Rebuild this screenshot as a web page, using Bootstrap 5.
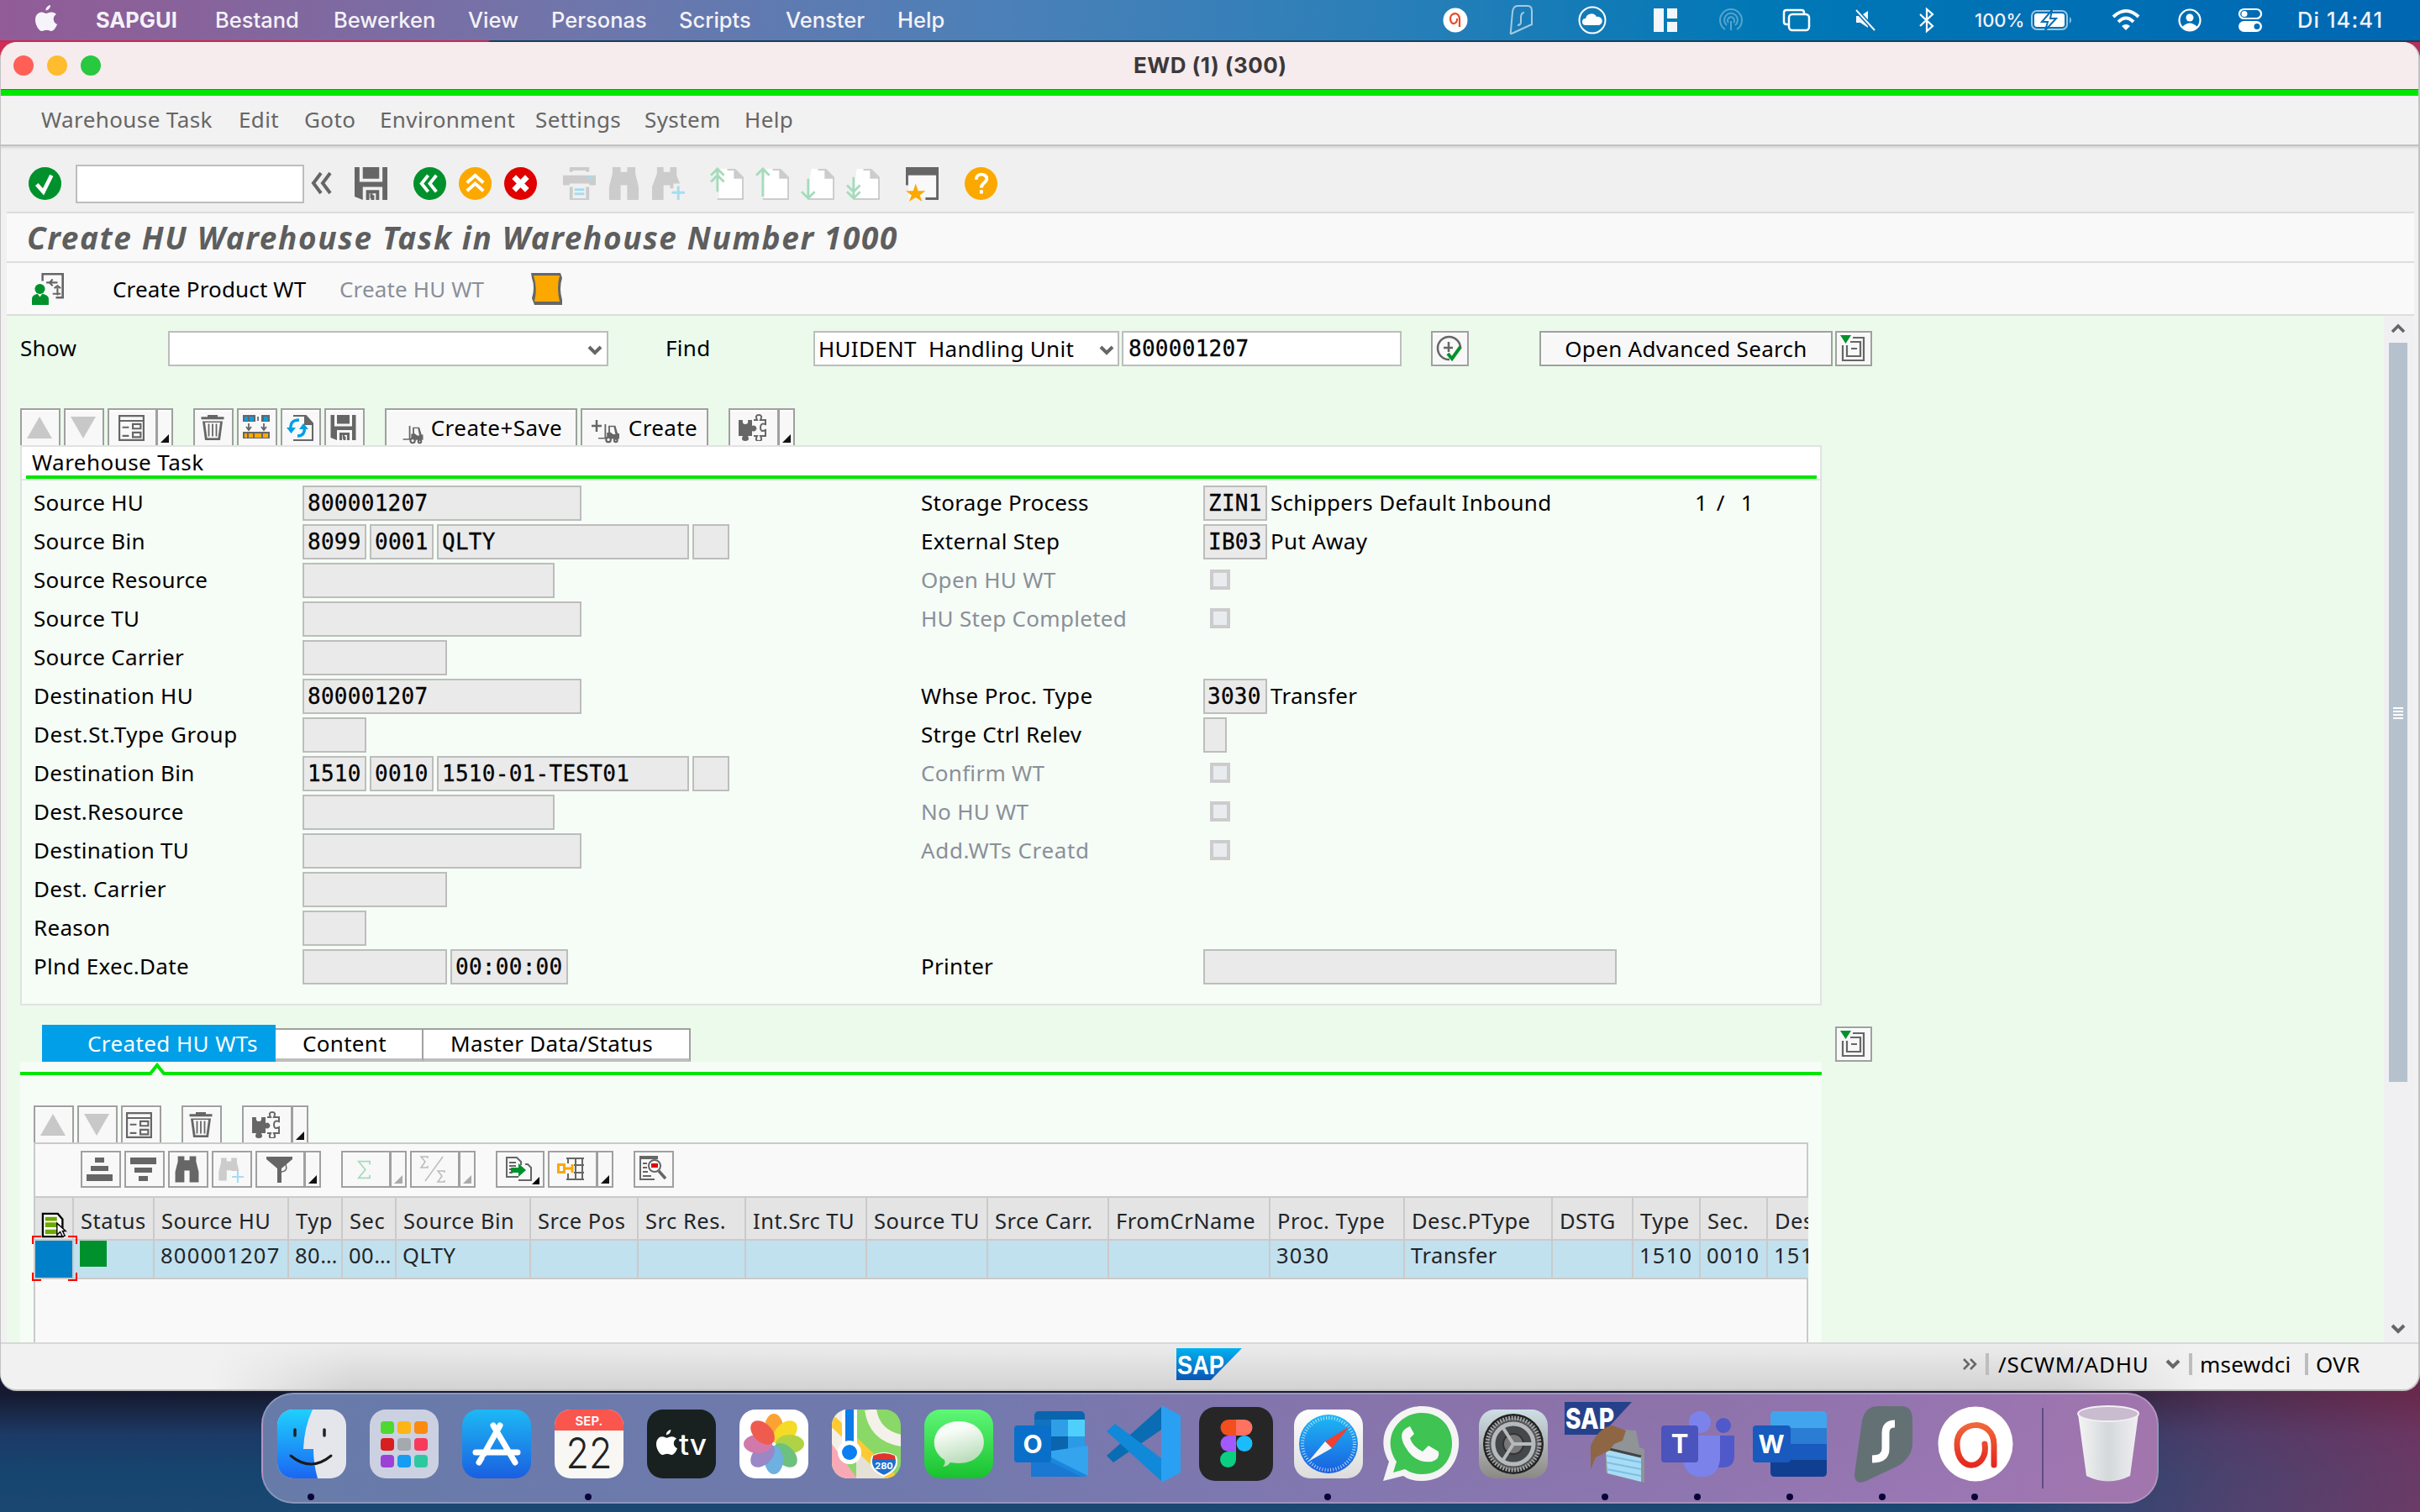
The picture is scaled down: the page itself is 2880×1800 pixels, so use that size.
<!DOCTYPE html>
<html lang="en">
<head>
<meta charset="utf-8">
<title>EWD (1) (300)</title>
<link rel="stylesheet" href="https://cdn.jsdelivr.net/npm/bootstrap@5.3.0/dist/css/bootstrap.min.css">
<style>
html,body{width:2880px;height:1800px;overflow:hidden}
body{font:26px/42px "Noto Sans","Open Sans",sans-serif;letter-spacing:.3px;color:#000;background:linear-gradient(90deg,#12406a00 0,#12406a00 82%,#7b3f6c88 92%,#a0335f99 100%),linear-gradient(180deg,#d12c56 0,#d12c56 800px,#161a30 1000px,#161a30 1660px,#1c3a66 1708px,#154670 1760px,#1b4773 100%)}
svg{display:block;flex:none;overflow:visible}
.grd{display:grid;white-space:nowrap}
.macbar{height:50px;line-height:48px;padding-bottom:2px;letter-spacing:0;font-family:Inter,sans-serif;font-size:25.5px;font-weight:500;color:#f4f2f8;padding-left:42px;grid-template-columns:72px 142px 141px 160px 99px 152px 127px 133px 649px 79px 82px 90px 78px 75px 85px 78px 66px 163px 79px 72px 70px 120px;align-items:center;background:linear-gradient(90deg,#c9284f 580px,#173f5a 584px) 0 48px/100% 2px no-repeat,linear-gradient(90deg,#915c98 0,#8a6199 180px,#6e76ab 700px,#4b80b8 1200px,#2a7fb8 1650px,#0078b6 2100px,#0067b2 2880px)}
.sapwin{height:1606px;border-radius:20px;overflow:hidden;background:#f1f1f1;border:solid #c2c2c2;border-width:0 2px 2px 1px}
.titlebar{height:56px;background:#f6eced;font:bold 26px/54px Inter,sans-serif;color:#3d383a;grid-template-columns:40px 40px 1253px 1fr;padding-left:15px;align-items:center}
.titlebar span{letter-spacing:.45px}
.lamp{width:24px;height:24px;border-radius:50%}
.greenbar{height:8px;background:#00e600;border-top:1px solid #0aa80a}
.sapmenu{height:58px;line-height:57px;padding-left:48px;color:#666;grid-template-columns:235px 78px 90px 185px 130px 119px 80px;background:#f2f2f2}
.sapmenu span{letter-spacing:.4px}
.sysbar{height:80px;padding:12px 0 0 33px;border-top:2px solid #c2c2c2;background:linear-gradient(#dcdcdc 2px,#eaeaea 2px 4px,#f0f0f0 4px)}
.sysbar svg{margin-top:-2px}
.cmdbox{width:272px;height:46px;border:2px solid #bdbdbd;background:#fff}
.main-col{margin:0 5px 0 7px}
.apptitle{height:59px;border-top:2px solid #ddd;background:#f9f9f9;font:italic bold 37px/57px "Noto Sans",sans-serif;letter-spacing:1.62px;color:#5e5e5e;padding-left:24px;white-space:nowrap}
.appbar{height:65px;border:solid #ddd;border-width:2px 0;background:#f9f9f9;grid-template-columns:96px 270px 228px 60px;align-items:center;padding-left:30px;letter-spacing:.15px}
.workarea{height:1222px;background:#ebfaeb;overflow:hidden}
.vscroll{width:36px;margin-left:auto;background:#f0f0f2;padding:10px 8px 0 6px}
.vthumb{width:22px;height:880px;background:#b5c2ce;margin-top:10px;padding:434px 5px 0}
.fld{height:42px;border:2px solid #bdbdbd;background:#eaeaea;font:26px/38px "DejaVu Sans Mono",monospace;padding-left:4px;white-space:pre;letter-spacing:.28px;margin-right:4px;flex:none;-webkit-text-stroke:.3px #000}
.fldw{background:#fff}
.tb{border:2px solid #a0a0a0;background:#f8f8f8;height:44px;width:48px;display:flex;align-items:center;justify-content:center;flex:none;box-shadow:inset 0 2px #fff;padding-right:3px}
.tabbtn{border-bottom:0}
.split{width:20px;margin-left:-1px;align-items:flex-end;justify-content:flex-end;padding:0 3px 3px 0}
.split::after{content:"";border:5px solid #111;border-top-color:#0000;border-left-color:#0000}
.split.off::after{border-right-color:#aaa;border-bottom-color:#aaa}
.me4{margin-right:4px}
.panelbox{width:2144px;height:667px;margin-left:16px;border:2px solid #e2e2e2;background:#f6fcf6}
.panelhead{height:40px;background:#fff;line-height:34px;padding-left:12px;border-bottom:2px solid #e2e2e2}
.panelhead span{letter-spacing:.45px;position:relative;top:1px}
.underline-g{height:4px;background:#00e600;margin:0 4px 0 -7px}
.frow{height:46px;width:2130px;padding:0 0 4px 12px;white-space:nowrap;display:flex}
.lb1{width:322px;padding-left:2px;flex:none;line-height:40px}
.leftpart{width:1058px;display:flex;flex:none}
.lb2{width:336px;flex:none;line-height:40px}
.tx{line-height:40px}
.dis{color:#8a8f99}
.ck{width:24px;height:24px;border:4px solid #ccc;background:#e8ecef;margin:8px 0 0 8px}
.tabs3{height:44px;margin:23px 0 0 42px;line-height:42px;align-items:flex-end}
.tab-on{width:278px;height:44px;background:#009fe8;color:#fff;padding-left:54px;line-height:44px;letter-spacing:.4px}
.tab-off{height:40px;border:2px solid #a0a0a0;border-left-width:0;border-bottom:4px solid #bdbdbd;background:#fff;line-height:33px}
.tabpane{width:2144px;margin-left:16px;background:#f6fcf6;height:340px}
.gridbox{width:2112px;height:240px;margin-left:16px;border:2px solid #cacaca;border-bottom:0;background:#f9f9f9;position:relative}
.gridbar{height:62px;padding:8px 0 0 54px}
.alv{table-layout:fixed;width:2190px;margin:0;white-space:nowrap;--bs-table-bg:transparent}
.alv th,.alv td{padding:0 0 0 8px;border:0 solid #cacaca;border-width:2px 0 2px 0;border-right-width:2px;font-weight:400;overflow:hidden;font-size:25.5px;letter-spacing:.5px}
.alv th{height:51px;background:#e4e4e4;line-height:44px}
.alv tbody td{height:46px;background:#c2e1ee;line-height:35px;border-top:0;padding:0 0 8px 7px}
.alv td.num{letter-spacing:1.25px}
.clipx{overflow:hidden;width:2110px}
.focusbox{position:absolute;left:-4px;top:109px}
.statusbar{height:56px;border-top:2px solid #d8d8d8;background:linear-gradient(90deg,#f1f1f1 250px,#f1f1f100 420px,#f1f1f100 2450px,#f1f1f1 2620px),linear-gradient(#ececec,#d3d3d3);grid-template-columns:1392px 936px 27px 15px 199px 28px 13px 125px 13px 60px;align-items:center;padding:0 0 7px 7px}
.bar4{width:4px;height:26px;background:#bdbdbd}
.dock{position:absolute;left:311px;top:1658px;width:2258px;height:132px;border-radius:38px;border:2px solid #ffffff38;background:radial-gradient(ellipse 700px 150px at 70% 0,#8c6fa4aa,#8c6fa400),linear-gradient(90deg,#677ba9 0,#7179ad 35%,#7e78b0 52%,#8b77b1 70%,#9a77b4 88%,#a275ad 100%)}
.dock svg{width:100%;height:100%}
.dock text{font-family:Inter,sans-serif;letter-spacing:0}
</style>
<script src="https://cdn.jsdelivr.net/npm/bootstrap@5.3.0/dist/js/bootstrap.bundle.min.js"></script>
</head>
<body>
<svg width="0" height="0" class="position-absolute">
<defs>
<symbol id="apple" viewBox="0 0 26 32"><path d="M18 0c.3 3-2.500 6.500-5.500 6.400C12 3.500 15 .5 18 0zM25 11c-5 3-4 10 1 12-1 3-4 8-7 8-2 0-3-1.200-5.500-1.200S10 31 8 31C4 31 0 23 0 18 0 12 3.500 8.500 7.500 8.500c2.300 0 4 1.500 5.500 1.500s3.500-1.700 6.500-1.500c2.200.1 4.200 1 5.500 2.500z"/></symbol>
<symbol id="save" viewBox="0 0 20 20"><path fill="#666" d="M0 0h3v9h14V0h3v20h-3v-8H5v8L0 18zM5 0h10v7H5zM7 14h8v6h-2v-4H9v4H7zM10 17h2v3h-2z"/><path d="M9.500 16h1.500v3H9.500z" fill="#666"/></symbol>
<symbol id="chk" viewBox="0 0 20 20"><circle cx="10" cy="10" r="10" fill="#00912c"/><path d="M5 10.500l4 4.500 5-10" fill="none" stroke="#fff" stroke-width="2.400"/></symbol>
<symbol id="binoc" viewBox="0 0 20 20"><path d="M3 0h5v3h4V0h5v4l2 8v8h-7v-9H8v9H1v-8l2-8z"/></symbol>
<symbol id="page" viewBox="0 0 20 20"><path d="M6 1h9l5 5v14H5V8" fill="#fff"/><path d="M4 19v1h16V6l-5-5h-5v1h5v4h4v13z" fill="#ccc"/><path d="M14 1l6 6h-6z" fill="#ccc"/></symbol>
<symbol id="trash" viewBox="0 0 20 20"><path fill="#666" d="M6 0h8v1.500h5v2H1v-2h5zM2 5h16l-2 15H4zM4 6l1.700 12.500h8.600L16 6z" fill-rule="evenodd"/><path d="M7 7v10M10 7v10M13 7v10M4 19h12" stroke="#666" stroke-width="1.200"/></symbol>
<symbol id="form" viewBox="0 0 20 20"><g fill="none" stroke="#666" stroke-width="1.400"><path d="M.7.700h18.600v18.600H.700zM.7 4.500h18.600M3 9.500h5M3 16h5M11 7h6v3.500h-6zM11 13.500h6V17h-6z"/></g></symbol>
<symbol id="puzzle" viewBox="0 0 33 32"><path fill="#666" d="M0 7h5q-1 5 3 5t3-5h5v7a3.500 3.500 0 110 6v6h-5q3 6-3 6t-3-6H0z"/><path d="M18 7h4q-3-6 2-6t2 6h6v5q-6-2-6 4t6 3v7h-6q3 6-2 6t-2-6h-4" fill="none" stroke="#666" stroke-width="2"/></symbol>
<symbol id="lift" viewBox="0 0 28 26"><path fill="#666" d="M8 1h2v17h2v2H0v-1.500h8zM13 3h9l3 10h2v7H11v-8h2zM15 4.500V11l4 3h3l-2-9.500z" fill-rule="evenodd"/><path d="M15 12l5 3h5v4H12v-6z" fill="#666"/><circle cx="13" cy="21" r="3" fill="#f8f8f8" stroke="#666" stroke-width="2.400"/><circle cx="22.500" cy="22" r="2" fill="#f8f8f8" stroke="#666" stroke-width="2.400"/></symbol>
<symbol id="up" viewBox="0 0 30 26"><path d="M15 0l15 26H0z" fill="#c8c8c8"/></symbol>
<symbol id="down" viewBox="0 0 30 26"><path d="M15 26L30 0H0z" fill="#c8c8c8"/></symbol>
<symbol id="chev" viewBox="0 0 16 12"><path d="M1 2l7 7 7-7" fill="none" stroke="#666" stroke-width="4"/></symbol>
<symbol id="explist" viewBox="0 0 30 32"><path d="M3 12v18h25V3H15M12 8h12v17H8V12M13 16h7" fill="none" stroke="#666" stroke-width="2.200"/><path d="M0 0h13L6.500 10z" fill="#00912c"/></symbol>
</defs>
</svg>

<nav class="macbar grd">
  <svg width="26" height="32" fill="#f6f4fa" class="mb-1"><use href="#apple"/></svg>
  <b>SAPGUI</b><span>Bestand</span><span>Bewerken</span><span>View</span><span>Personas</span><span>Scripts</span><span>Venster</span><span>Help</span>
  <svg width="30" height="30" viewBox="0 0 30 30"><circle cx="15" cy="15" r="14.500" fill="#fff"/><path d="M20 23V14c0-10-11-8-11-1 0 9 9 7 8 0" fill="none" stroke="#e8492c" stroke-width="2.200"/></svg>
  <svg width="28" height="36" viewBox="0 0 28 36" fill="none" stroke="#fff" stroke-opacity=".6" stroke-width="2"><path d="M10 1h12q5 0 5 6v16L3 34q-2 1-1-3L4 8q1-7 6-7z"/><path d="M18 9q-4 0-4 6v5q0 4-4 4"/></svg>
  <svg width="34" height="34" viewBox="0 0 34 34"><circle cx="17" cy="17" r="15.500" fill="none" stroke="#fff" stroke-width="2"/><path d="M9 23a4 4 0 010-8 7 7 0 0113-2 5 5 0 013 10z" fill="#fff"/></svg>
  <svg width="28" height="28" viewBox="0 0 28 28" fill="#f3f6fa"><path d="M0 0h12v28H0zM16 0h12v12H16zM16 16h12v12H16z"/></svg>
  <svg width="28" height="28" viewBox="0 0 28 28" fill="none" stroke="#fff" stroke-opacity=".33" stroke-width="2"><path d="M7 25a13 13 0 1114 0M9 20a8 8 0 1110 0M11 17a4 4 0 116 0M14 15v11"/></svg>
  <svg width="34" height="28" viewBox="0 0 34 28" fill="none" stroke="#fff" stroke-width="2.500"><path d="M8 19H5q-3 0-3-3V5q0-3 3-3h18q3 0 3 3v2"/><rect x="8" y="7" width="24" height="19" rx="4"/></svg>
  <svg width="28" height="26" viewBox="0 0 28 26"><path d="M3 8h5l9-6v20l-9-6H3z" fill="#f3f6fa"/><path d="M2 0l23 25" stroke="#0072b4" stroke-width="5"/><path d="M3 1l22 24" stroke="#f3f6fa" stroke-width="2"/></svg>
  <svg width="18" height="28" viewBox="0 0 18 28" fill="none" stroke="#fff" stroke-width="2.200"><path d="M1 7l15 14-7 6V1l7 6L1 21"/></svg>
  <span class="d-flex align-items-center" style="font-size:22px">100%<svg class="ms-2" width="50" height="26" viewBox="0 0 50 26"><rect x="1" y="2" width="42" height="22" rx="6" fill="none" stroke="#fff" stroke-opacity=".6" stroke-width="2"/><rect x="4" y="5" width="36" height="16" rx="3" fill="#fff"/><path d="M46 9v8q4-4 0-8z" fill="#fff" opacity=".6"/><path d="M25 1L13 15h7l-3 10 13-14h-7z" fill="#fff" stroke="#0070b4" stroke-width="2"/></svg></span>
  <svg width="34" height="26" viewBox="0 0 34 26" fill="none" stroke="#fff" stroke-width="4"><path d="M2 9q15-14 30 0M8 15q9-9 18 0"/><path d="M17 25l-5-5q5-4 10 0z" fill="#fff" stroke="none"/></svg>
  <svg width="28" height="28" viewBox="0 0 28 28"><circle cx="14" cy="14" r="12.500" fill="none" stroke="#fff" stroke-width="2.200"/><circle cx="14" cy="11" r="4.500" fill="#fff"/><path d="M5 22q9-9 18 0-9 8-18 0z" fill="#fff"/></svg>
  <svg width="28" height="28" viewBox="0 0 28 28"><rect x="1" y="1" width="26" height="11" rx="5.500" fill="none" stroke="#fff" stroke-width="2.200"/><circle cx="7" cy="6.500" r="3.500" fill="#fff"/><rect y="15" width="28" height="13" rx="6.500" fill="#fff"/><circle cx="22" cy="21.500" r="3.500" fill="#006db3"/></svg>
  <span style="letter-spacing:1.100px">Di 14:41</span>
</nav>

<main class="sapwin">
  <div class="titlebar grd"><i class="lamp" style="background:#ff5f57"></i><i class="lamp" style="background:#febc2e"></i><i class="lamp" style="background:#28c840"></i><span>EWD (1) (300)</span></div>
  <div class="greenbar"></div>
  <div class="sapmenu grd"><span>Warehouse Task</span><span>Edit</span><span>Goto</span><span>Environment</span><span>Settings</span><span>System</span><span>Help</span></div>
  <div class="sysbar d-flex align-items-center">
    <svg width="39" height="39"><use href="#chk"/></svg>
    <div class="cmdbox" style="margin:0 8px 0 17px"></div>
    <svg width="25" height="26" viewBox="0 0 25 26" fill="none" stroke="#666" stroke-width="4" style="margin-right:27px"><path d="M12 1L3 13l9 12M23 1l-9 12 9 12"/></svg>
    <svg width="39" height="39" style="margin-right:31px"><use href="#save"/></svg>
    <svg width="39" height="39" viewBox="0 0 20 20" style="margin-right:15px"><circle cx="10" cy="10" r="10" fill="#00912c"/><path d="M9 5l-4 5 4 5M14 5l-4 5 4 5" fill="none" stroke="#fff" stroke-width="2"/></svg>
    <svg width="39" height="39" viewBox="0 0 20 20" style="margin-right:15px"><circle cx="10" cy="10" r="10" fill="#fba900"/><path d="M5 9.500l5-4.500 5 4.500M5 14.500L10 10l5 4.500" fill="none" stroke="#fff" stroke-width="2"/></svg>
    <svg width="39" height="39" viewBox="0 0 20 20" style="margin-right:31px"><circle cx="10" cy="10" r="10" fill="#e00000"/><path d="M6 6l8 8M14 6l-8 8" stroke="#fff" stroke-width="3.400"/></svg>
    <svg width="39" height="39" viewBox="0 0 20 20" style="margin-right:14px"><path d="M4 0h12v3h-2V2H6v1H4zM0 5h20v6h-4v-1H4v1H0zM4 12h2v7h8v-7h2v8H4z" fill="#ccc"/><path d="M15.500 5.500h2.500v2h-2.500zM7 13h6v1.500H7zM7 15.500h6V17H7z" fill="#a6dcf2"/></svg>
    <svg width="39" height="39" fill="#ccc" style="margin-right:14px"><use href="#binoc"/></svg>
    <svg width="39" height="39" viewBox="0 0 20 20" style="margin-right:31px"><path d="M3 0h4v3h4V0h4v5l2 5h-4v3h-2v-2H7v9H0v-8l3-8z" fill="#ccc"/><path d="M12 15.500h8M16 11.500v8.500" stroke="#a6dcf2" stroke-width="1.500"/></svg>
    <svg width="39" height="39" viewBox="0 0 20 20" style="margin-right:15px"><use href="#page"/><path d="M4 15V1M0 5l4-4 4 4M0 9l4-4 4 4" fill="none" stroke="#a4dcbb" stroke-width="1.400"/></svg>
    <svg width="39" height="39" viewBox="0 0 20 20" style="margin-right:15px"><use href="#page"/><path d="M4 18V1M0 5l4-4 4 4" fill="none" stroke="#a4dcbb" stroke-width="1.400"/></svg>
    <svg width="39" height="39" viewBox="0 0 20 20" style="margin-right:15px"><use href="#page"/><path d="M4 7v12M0 15l4 4 4-4" fill="none" stroke="#a4dcbb" stroke-width="1.400"/></svg>
    <svg width="39" height="39" viewBox="0 0 20 20" style="margin-right:31px"><use href="#page"/><path d="M4 6v13M0 15l4 4 4-4M0 11l4 4 4-4" fill="none" stroke="#a4dcbb" stroke-width="1.400"/></svg>
    <svg width="39" height="39" viewBox="0 0 20 20" style="margin-right:31px"><path d="M0 0h20v20h-8v-1.500h6.500V5h-17v6H0z" fill="#666"/><path d="M1.500 5h17v13.500h-17z" fill="#fff" opacity=".6"/><path d="M6 10l1.500 4.500H12l-3.500 2.700L10 21l-4-2.500L2 21l1.500-3.800L0 14.500h4.500z" fill="#fba900"/></svg>
    <svg width="39" height="39" viewBox="0 0 20 20"><circle cx="10" cy="10" r="10" fill="#fba900"/><path d="M7 7.500c0-4 6.500-4 6.500-.5 0 2.500-3.300 2.500-3.300 5.500M10.200 14v2.200" fill="none" stroke="#fff" stroke-width="2"/></svg>
  </div>
  <div class="main-col">
    <div class="apptitle">Create HU Warehouse Task in Warehouse Number 1000</div>
    <div class="appbar grd">
      <svg width="38" height="38" viewBox="0 0 20 20"><path d="M6 5V0h14v16h-5v-1.300h3.600V1.300H7.300V5z" fill="#666"/><path d="M9 6h7M13 4l-2 2 2 2M16 9v5M14 9.500l2-1.500 2 1.500M13 13h5" fill="none" stroke="#666" stroke-width="1.100"/><circle cx="5" cy="10" r="3.200" fill="#00912c"/><path d="M0 20v-4q0-2 3.500-3l1.500 2 1.500-2Q10.500 14 10.500 16v4z" fill="#00912c"/></svg>
      <span>Create Product WT</span><span class="dis">Create HU WT</span>
      <svg width="38" height="38" viewBox="0 0 38 38"><path d="M0 0h35l2 6q-4 12 0 26v6H4l-3-8q4-13 0-24z" fill="#666"/><path d="M3 3h31q-4 14 0 31H4q4-15-1-31z" fill="#fba900"/></svg>
    </div>
    <div class="workarea d-flex">
      <div style="width:2260px">
        <div class="d-flex" style="padding:18px 0 0 16px;line-height:40px;white-space:nowrap">
          <span style="width:176px">Show</span>
          <div class="fld fldw d-flex align-items-center justify-content-end" style="width:524px;padding-right:5px;margin-right:68px"><svg width="18" height="12" class="mt-1"><use href="#chev"/></svg></div>
          <span style="width:176px">Find</span>
          <div class="fld fldw d-flex align-items-center" style="width:364px;margin-right:3px;font-family:'Noto Sans';letter-spacing:.3px;-webkit-text-stroke:0">HUIDENT  Handling Unit<svg width="18" height="12" class="ms-auto me-1 mt-1"><use href="#chev"/></svg></div>
          <div class="fld fldw" style="width:333px;margin-right:35px;padding-left:6px">800001207</div>
          <div class="tb" style="width:45px;height:42px;margin-right:84px"><svg width="32" height="32" viewBox="0 0 32 32"><path d="M17 29a13.500 13.500 0 1113-13M16 8v12M10 15h11" fill="none" stroke="#666" stroke-width="2.500"/><path d="M15 22l5 6 10-14" fill="none" stroke="#00912c" stroke-width="4"/></svg></div>
          <div class="tb" style="width:349px;height:42px;margin-right:3px;padding:0">Open Advanced Search</div>
          <div class="tb" style="width:44px;height:42px"><svg width="30" height="32"><use href="#explist"/></svg></div>
        </div>
        <div class="d-flex" style="margin:50px 0 0 16px">
          <div class="tb tabbtn me4"><svg width="30" height="26"><use href="#up"/></svg></div>
          <div class="tb tabbtn me4"><svg width="30" height="26"><use href="#down"/></svg></div>
          <div class="tb tabbtn" style="width:59px"><svg width="31" height="31"><use href="#form"/></svg></div><div class="tb tabbtn split" style="margin-right:24px"></div>
          <div class="tb tabbtn me4"><svg width="30" height="34"><use href="#trash"/></svg></div>
          <div class="tb tabbtn me4"><svg width="32" height="30" viewBox="0 0 32 30"><path d="M0 0h32v8H0zM0 20h32v8H0z" fill="#666"/><path d="M2 2h4v5H2zM8 2h5v5H8zM25 2h5v5h-5z" fill="#009fe8"/><path d="M2 22h3v5H2zM7 22h5v5H7zM14 22h8v5h-8zM24 22h6v5h-6z" fill="#fba900"/><path d="M15 0h7v8h-7z" fill="#f8f8f8"/><path d="M18 2v5M7 10v8M4 14l3 4 3-4M25 10v8M22 14l3 4 3-4" fill="none" stroke="#666" stroke-width="1.800"/></svg></div>
          <div class="tb tabbtn me4"><svg width="32" height="31" viewBox="0 0 32 31"><path d="M8 1h15l8 9v20H8M22 1v10h9" fill="none" stroke="#666" stroke-width="2"/><path d="M22 1l9 9h-9z" fill="#666"/><path d="M5 16Q4 6 15 6M21 13Q23 25 13 25" fill="none" stroke="#009fe8" stroke-width="3.500"/><path d="M0 15h11l-5.500 7zM15 17h11l-6-7z" fill="#009fe8"/></svg></div>
          <div class="tb tabbtn" style="margin-right:24px"><svg width="31" height="30"><use href="#save"/></svg></div>
          <div class="tb tabbtn me4" style="width:229px;padding:0 0 0 3px;letter-spacing:.45px"><svg class="mt-3 me-2" width="26" height="23"><use href="#lift"/></svg>Create+Save</div>
          <div class="tb tabbtn" style="width:152px;margin-right:24px;padding:0"><svg class="mt-2" width="34" height="28" viewBox="0 0 34 28"><path d="M0 8h12M6 1v14" stroke="#666" stroke-width="2.500"/><use href="#lift" x="8" y="5" width="26" height="24"/></svg><span style="margin-left:10px;letter-spacing:.4px">Create</span></div>
          <div class="tb tabbtn" style="width:60px"><svg width="33" height="32"><use href="#puzzle"/></svg></div><div class="tb tabbtn split"></div>
        </div>
        <section class="panelbox">
          <div class="panelhead"><span>Warehouse Task</span><div class="underline-g"></div></div>
          <div style="height:6px"></div>
          <div class="frow"><div class="leftpart"><span class="lb1">Source HU</span><div class="fld" style="width:332px">800001207</div></div><span class="lb2">Storage Process</span><div class="fld" style="width:76px">ZIN1</div><span class="tx" style="width:505px">Schippers Default Inbound</span><span class="tx" style="letter-spacing:2px">1 /&nbsp; 1</span></div>
          <div class="frow"><div class="leftpart"><span class="lb1">Source Bin</span><div class="fld" style="width:76px">8099</div><div class="fld" style="width:76px">0001</div><div class="fld" style="width:300px">QLTY</div><div class="fld" style="width:44px"></div></div><span class="lb2">External Step</span><div class="fld" style="width:76px">IB03</div><span class="tx">Put Away</span></div>
          <div class="frow"><div class="leftpart"><span class="lb1">Source Resource</span><div class="fld" style="width:300px"></div></div><span class="lb2 dis">Open HU WT</span><div class="ck"></div></div>
          <div class="frow"><div class="leftpart"><span class="lb1">Source TU</span><div class="fld" style="width:332px"></div></div><span class="lb2 dis">HU Step Completed</span><div class="ck"></div></div>
          <div class="frow"><div class="leftpart"><span class="lb1">Source Carrier</span><div class="fld" style="width:172px"></div></div></div>
          <div class="frow"><div class="leftpart"><span class="lb1">Destination HU</span><div class="fld" style="width:332px">800001207</div></div><span class="lb2">Whse Proc. Type</span><div class="fld" style="width:76px;padding-left:3px">3030</div><span class="tx">Transfer</span></div>
          <div class="frow"><div class="leftpart"><span class="lb1" style="letter-spacing:.55px">Dest.St.Type Group</span><div class="fld" style="width:76px"></div></div><span class="lb2">Strge Ctrl Relev</span><div class="fld" style="width:28px"></div></div>
          <div class="frow"><div class="leftpart"><span class="lb1">Destination Bin</span><div class="fld" style="width:76px">1510</div><div class="fld" style="width:76px">0010</div><div class="fld" style="width:300px">1510-01-TEST01</div><div class="fld" style="width:44px"></div></div><span class="lb2 dis">Confirm WT</span><div class="ck"></div></div>
          <div class="frow"><div class="leftpart"><span class="lb1">Dest.Resource</span><div class="fld" style="width:300px"></div></div><span class="lb2 dis">No HU WT</span><div class="ck"></div></div>
          <div class="frow"><div class="leftpart"><span class="lb1">Destination TU</span><div class="fld" style="width:332px"></div></div><span class="lb2 dis" style="letter-spacing:.65px">Add.WTs Creatd</span><div class="ck"></div></div>
          <div class="frow"><div class="leftpart"><span class="lb1">Dest. Carrier</span><div class="fld" style="width:172px"></div></div></div>
          <div class="frow"><div class="leftpart"><span class="lb1">Reason</span><div class="fld" style="width:76px"></div></div></div>
          <div class="frow"><div class="leftpart"><span class="lb1">Plnd Exec.Date</span><div class="fld" style="width:172px"></div><div class="fld" style="width:140px">00:00:00</div></div><span class="lb2">Printer</span><div class="fld" style="width:492px"></div></div>
        </section>
        <div class="tabs3 d-flex">
          <div class="tab-on">Created HU WTs</div><div class="tab-off" style="width:176px;padding-left:32px">Content</div><div class="tab-off" style="width:318px;padding-left:32px">Master Data/Status</div>
          <div class="tb" style="width:44px;height:42px;margin-left:1362px"><svg width="30" height="32"><use href="#explist"/></svg></div>
        </div>
        <div class="tabpane">
          <svg width="2144" height="52" viewBox="0 0 2144 52"><path d="M0 14h155l8-10 8 10h1973" fill="none" stroke="#00e600" stroke-width="4"/></svg>
          <div class="d-flex" style="margin-left:16px">
            <div class="tb tabbtn me4"><svg width="30" height="26"><use href="#up"/></svg></div>
            <div class="tb tabbtn me4"><svg width="30" height="26"><use href="#down"/></svg></div>
            <div class="tb tabbtn" style="margin-right:24px;padding-right:5px"><svg width="31" height="31"><use href="#form"/></svg></div>
            <div class="tb tabbtn" style="margin-right:24px"><svg width="30" height="34"><use href="#trash"/></svg></div>
            <div class="tb tabbtn" style="width:60px"><svg width="33" height="32"><use href="#puzzle"/></svg></div><div class="tb tabbtn split"></div>
          </div>
          <div class="gridbox">
            <div class="gridbar d-flex">
              <div class="tb me4"><svg width="31" height="28" viewBox="0 0 31 28" fill="#666"><path d="M10 0h11v6H10zM5 10h21v6H5zM0 20h31v8H0z"/></svg></div>
              <div class="tb me4"><svg width="31" height="28" viewBox="0 0 31 28" fill="#666"><path d="M0 0h31v8H0zM5 12h21v6H5zM10 22h11v6H10z"/></svg></div>
              <div class="tb me4"><svg width="31" height="32" fill="#666"><use href="#binoc"/></svg></div>
              <div class="tb me4"><svg width="31" height="32" viewBox="0 0 31 32"><use href="#binoc" fill="#ccc" width="27" height="32"/><path d="M16 18h15v14H16z" fill="#f9f9f9"/><path d="M17 25h14M24 18v14" stroke="#a6dcf2" stroke-width="2.200"/></svg></div>
              <div class="tb" style="width:59px"><svg width="31" height="31" viewBox="0 0 31 31"><path d="M0 0h31v3L18 14v17h-5V14L0 3z" fill="#666"/><path d="M22 7q5 10-4 11" fill="none" stroke="#666" stroke-width="1.500"/></svg></div><div class="tb split" style="margin-right:24px"></div>
              <div class="tb" style="width:59px;padding-right:6px"><svg width="16" height="23" viewBox="0 0 18 24" fill="none" stroke="#a4dcbb" stroke-width="2"><path d="M17 5V1H2l9 11L2 23h15v-4"/></svg></div><div class="tb split off me4"></div>
              <div class="tb" style="width:59px"><svg width="32" height="32" viewBox="0 0 32 32" fill="none" stroke="#bbb" stroke-width="1.500"><path d="M9 3V1H1l5 6-5 7h8v-2M27 1L6 30M29 20v-2h-8l5 6-5 7h8v-2"/></svg></div><div class="tb split off" style="margin-right:24px"></div>
              <div class="tb me4" style="width:58px"><svg width="34" height="30" viewBox="0 0 34 30"><path d="M16 24H2V1h12l5 5v4M5 7h8M5 11h8M5 15h4M5 19h4M24 9h3l4 4v15H16" fill="none" stroke="#666" stroke-width="2"/><path d="M7 13h9V8l9 8-9 8v-5H7z" fill="#00912c"/><path d="M41 24v9h-9z"/></svg></div>
              <div class="tb" style="width:59px"><svg width="34" height="30" viewBox="0 0 34 30"><path d="M11 2h21M11 10h21M11 19h21M11 27h21M13 1v27M22 1v27M30 1v27" stroke="#666" stroke-width="2"/><path d="M0 8h20v12H0z" fill="#f9f9f9"/><path d="M1.500 9.500h7v9h-7zM9 14h8M18 9v10" fill="none" stroke="#fba900" stroke-width="3"/></svg></div><div class="tb split" style="margin-right:24px"></div>
              <div class="tb"><svg width="34" height="32" viewBox="0 0 34 32"><path d="M19 28H2V2h21M5 9h5M5 14h5M5 19h6M5 24h10" fill="none" stroke="#666" stroke-width="2"/><path d="M1 0h22v4H1z" fill="#666"/><circle cx="19" cy="12" r="7" fill="#fff" stroke="#666" stroke-width="2"/><path d="M15 9h8v5h-8z" fill="#e00000"/><path d="M24 18l8 9" stroke="#666" stroke-width="3.500"/></svg></div>
            </div>
            <div class="clipx">
            <table class="table alv">
              <colgroup><col style="width:45px"><col style="width:96px"><col style="width:160px"><col style="width:64px"><col style="width:64px"><col style="width:160px"><col style="width:128px"><col style="width:128px"><col style="width:144px"><col style="width:144px"><col style="width:144px"><col style="width:192px"><col style="width:160px"><col style="width:176px"><col style="width:96px"><col style="width:80px"><col style="width:80px"><col style="width:129px"></colgroup>
              <thead><tr><th><svg width="30" height="32" viewBox="0 0 32 32"><path d="M1 1h19l6 7v22H1z" fill="#fff" stroke="#000" stroke-width="2.500"/><path d="M4 5h15v5H4zM4 12h15v6H4zM4 21h15v6H4z" fill="#6fa800"/><path d="M19 13v15l4-4 3 6 3-1-3-6h4z" fill="#fff" stroke="#000" stroke-width="1.500"/></svg></th><th>Status</th><th>Source HU</th><th>Typ</th><th>Sec</th><th>Source Bin</th><th>Srce Pos</th><th>Src Res.</th><th>Int.Src TU</th><th>Source TU</th><th>Srce Carr.</th><th>FromCrName</th><th>Proc. Type</th><th>Desc.PType</th><th>DSTG</th><th>Type</th><th>Sec.</th><th>Dest.Bin</th></tr></thead>
              <tbody><tr><td style="background:#0080c9"></td><td><div style="width:32px;height:31px;background:#00912c"></div></td><td class="num">800001207</td><td>80…</td><td>00…</td><td>QLTY</td><td></td><td></td><td></td><td></td><td></td><td></td><td class="num">3030</td><td>Transfer</td><td></td><td class="num">1510</td><td class="num">0010</td><td class="num">1510-01</td></tr></tbody>
            </table>
            </div>
            <svg class="focusbox" width="54" height="54" viewBox="0 0 54 54" fill="none" stroke="#f00" stroke-width="2"><path d="M1 10V1h10M43 1h10v9M53 44v9H43M11 53H1v-9"/></svg>
          </div>
        </div>
      </div>
      <div class="vscroll"><svg width="18" height="12" viewBox="0 0 16 12" class="mx-auto"><path d="M1 9l7-7 7 7" fill="none" stroke="#666" stroke-width="3.500"/></svg><div class="vthumb"><svg width="12" height="14" viewBox="0 0 12 14"><path d="M0 1h12M0 5h12M0 9h12M0 13h12" stroke="#fff" stroke-width="2"/></svg></div><svg width="18" height="12" viewBox="0 0 16 12" class="mx-auto" style="margin-top:288px"><path d="M1 2l7 7 7-7" fill="none" stroke="#666" stroke-width="4"/></svg></div>
    </div>
  </div>
  <footer class="statusbar grd">
    <span></span>
    <svg width="78" height="38" viewBox="0 0 78 38"><defs><linearGradient id="sapg" x2="0" y2="1"><stop stop-color="#00b1f0"/><stop offset="1" stop-color="#0a55b5"/></linearGradient></defs><path d="M0 0h78L41 38H0z" fill="url(#sapg)"/><text x="1" y="31" font-family="Liberation Sans" font-weight="bold" font-size="32" textLength="56" lengthAdjust="spacingAndGlyphs" fill="#fff" style="letter-spacing:0">SAP</text></svg>
    <svg width="17" height="14" viewBox="0 0 17 14" fill="none" stroke="#666" stroke-width="2.500"><path d="M1 1l6 6-6 6M9 1l6 6-6 6"/></svg>
    <i class="bar4"></i><span style="letter-spacing:.8px">/SCWM/ADHU</span>
    <svg width="18" height="12"><use href="#chev"/></svg><i class="bar4"></i><span>msewdci</span><i class="bar4"></i><span>OVR</span>
  </footer>
</main>

<div class="dock">
<svg viewBox="313 1660 2254 128">
<defs>
<linearGradient id="gb" x2="0" y2="1"><stop stop-color="#1db9f5"/><stop offset="1" stop-color="#1a5fe0"/></linearGradient>
<linearGradient id="gg" x2="0" y2="1"><stop stop-color="#5ff777"/><stop offset="1" stop-color="#18c22e"/></linearGradient>
<linearGradient id="gf" x2="0" y2="1"><stop stop-color="#1fd0fd"/><stop offset="1" stop-color="#1b66f2"/></linearGradient>
<linearGradient id="gw" x2="0" y2="1"><stop stop-color="#fff"/><stop offset="1" stop-color="#dcdcdc"/></linearGradient>
<linearGradient id="gt" x2="1"><stop stop-color="#f4f4f4"/><stop offset=".5" stop-color="#d4d8da"/><stop offset="1" stop-color="#f0eff2"/></linearGradient>
<linearGradient id="gs" x2="0" y2="1"><stop stop-color="#cfdfe6"/><stop offset="1" stop-color="#8b8984"/></linearGradient>
<linearGradient id="ga" x2="0" y2="1"><stop stop-color="#f0663a"/><stop offset="1" stop-color="#e5281f"/></linearGradient>
<linearGradient id="gm" x2=".3" y2="1"><stop offset=".3" stop-color="#f6fcf6"/><stop offset="1" stop-color="#b9dcb9"/></linearGradient>
<clipPath id="rr"><rect x="-41" y="-41" width="82" height="82" rx="19"/></clipPath>
</defs>
<g transform="translate(371 1719)"><g clip-path="url(#rr)"><rect x="-41" y="-41" width="82" height="82" fill="#e4e6ec"/><path d="M-41-41H1Q-9-20-10 6H2q0 18 5 35h-48z" fill="url(#gf)"/></g><path d="M-20-17v7M15-17v7" stroke="#222" stroke-width="3.500" stroke-linecap="round"/><path d="M-25 14q24 20 48 0" fill="none" stroke="#1a1a1a" stroke-width="3" stroke-linecap="round"/></g>
<g transform="translate(481 1719)"><rect x="-41" y="-41" width="82" height="82" rx="19" fill="#ccd1e2"/><g><rect x="-28" y="-27" width="16" height="15" rx="4" fill="#4fd92f"/><rect x="-8" y="-27" width="16" height="15" rx="4" fill="#fdb515"/><rect x="12" y="-27" width="16" height="15" rx="4" fill="#fb8a10"/><rect x="-28" y="-7" width="16" height="15" rx="4" fill="#d81e1e"/><rect x="-8" y="-7" width="16" height="15" rx="4" fill="#a3a9ac"/><rect x="12" y="-7" width="16" height="15" rx="4" fill="#f83a5c"/><rect x="-28" y="13" width="16" height="15" rx="4" fill="#9c41d6"/><rect x="-8" y="13" width="16" height="15" rx="4" fill="#169cf0"/><rect x="12" y="13" width="16" height="15" rx="4" fill="#2cc9a0"/></g></g>
<g transform="translate(591 1719)"><rect x="-41" y="-41" width="82" height="82" rx="19" fill="url(#gb)"/><path d="M4-22L-15 12M-4-22l26 44M-25 10h50M-18 17l-3 5" stroke="#fff" stroke-width="7" stroke-linecap="round"/></g>
<g transform="translate(701 1719)"><g clip-path="url(#rr)"><rect x="-41" y="-41" width="82" height="82" fill="#f8f7f4"/><path d="M-41-41h82v25h-82z" fill="#fb564e"/></g><text x="0" y="-22" text-anchor="middle" font-size="15" font-weight="600" fill="#fff">SEP.</text><text x="0" y="29" text-anchor="middle" font-size="51" font-weight="300" fill="#222" textLength="55" lengthAdjust="spacingAndGlyphs">22</text></g>
<g transform="translate(811 1719)"><rect x="-41" y="-41" width="82" height="82" rx="19" fill="#18211f"/><use href="#apple" x="-30" y="-17" width="25" height="31" fill="#fff"/><text x="-3" y="13" font-size="34" font-weight="500" fill="#fff" textLength="33" lengthAdjust="spacingAndGlyphs">tv</text></g>
<g transform="translate(921 1719)"><rect x="-41" y="-41" width="82" height="82" rx="19" fill="#fff"/><g opacity=".9"><ellipse cy="-19" rx="11" ry="17" fill="#fb9a1c"/><ellipse cy="-19" rx="11" ry="17" fill="#f3d80f" transform="rotate(45)"/><ellipse cy="-19" rx="11" ry="17" fill="#a8cf31" transform="rotate(90)"/><ellipse cy="-19" rx="11" ry="17" fill="#5ebb71" transform="rotate(135)"/><ellipse cy="-19" rx="11" ry="17" fill="#5fa8dd" transform="rotate(180)"/><ellipse cy="-19" rx="11" ry="17" fill="#8f7bc0" transform="rotate(225)"/><ellipse cy="-19" rx="11" ry="17" fill="#cd6ba2" transform="rotate(270)"/><ellipse cy="-19" rx="11" ry="17" fill="#ee4b3c" transform="rotate(315)"/></g></g>
<g transform="translate(1031 1719)"><g clip-path="url(#rr)"><rect x="-41" y="-41" width="82" height="82" fill="#8ad867"/><path d="M-41-41h18v82h-18z" fill="#f3efe6"/><path d="M-41 0l30 41h-30z" fill="#f7a9b5"/><path d="M-12 0v41h50z" fill="#e6e1d6"/><path d="M-41-28L35 45" stroke="#fdca34" stroke-width="12"/><path d="M5-41q5 35 45 38" fill="none" stroke="#f4f1ea" stroke-width="14"/><path d="M-20-41V6" stroke="#fff" stroke-width="18"/><path d="M-20-41V4" stroke="#0b7ce8" stroke-width="10"/><circle cx="-20" cy="10" r="14" fill="#fff"/><circle cx="-20" cy="10" r="9" fill="#0b7ff2"/></g><path d="M7 15q14-8 28 0 5 15-14 23Q2 30 7 15z" fill="#1c6fd0" stroke="#fff" stroke-width="2"/><path d="M8 14q13-6 26 0v4H8z" fill="#e0352c"/><text x="21" y="30" text-anchor="middle" font-size="11" font-weight="700" fill="#fff">280</text></g>
<g transform="translate(1141 1719)"><rect x="-41" y="-41" width="82" height="82" rx="19" fill="url(#gg)"/><path d="M0-27c40 0 40 50 0 50-5 0-8-1-10-1-3 4-6 5-9 5 3-3 3-5 2-8-22-14-13-46 17-46z" fill="url(#gm)"/></g>
<g transform="translate(1249 1719)"><rect x="-18" y="-39" width="60" height="52" rx="5" fill="#0a64ae"/><path d="M-18-29h20V10h-20z" fill="#1173bd"/><path d="M2-29h20v20H2z" fill="#2e9fe6"/><path d="M22-29h20v20H22z" fill="#4fd0fc"/><path d="M22-9h20v20H22z" fill="#2b9be5"/><path d="M-22 38V8l32 10L46 2v32q0 5-5 5h-60z" fill="#1c86dc"/><path d="M46 38L-10 10l56-8z" fill="#34a4ee"/><path d="M-22 10l60 29h-60z" fill="#1a78d2"/><rect x="-42" y="-22" width="44" height="44" rx="4" fill="#0a6fc8"/><text x="-20" y="11" text-anchor="middle" font-size="30" font-weight="700" fill="#fff">O</text></g>
<g transform="translate(1361 1719)"><path d="M21-44v27L-36 22l-8-8z" fill="#0a6cb2"/><path d="M21 17L-34-24l-10 9 65 59z" fill="#1089d8"/><path d="M21-46l23 12v68L21 46z" fill="#2aa0f2"/></g>
<g transform="translate(1471 1719)"><rect x="-44" y="-44" width="88" height="88" rx="19" fill="#262626"/><path d="M0-29v19h-9a9.500 9.500 0 010-19z" fill="#f24e1e"/><path d="M0-29h10a9.500 9.500 0 010 19H0z" fill="#ff7262"/><path d="M0-10V9h-9a9.500 9.500 0 010-19z" fill="#a259ff"/><circle cx="10" cy="-.5" r="9.500" fill="#1abcfe"/><path d="M0 9v9.500A9.500 9.500 0 11-9.500 9z" fill="#0acf83"/></g>
<g transform="translate(1581 1719)"><rect x="-41" y="-41" width="82" height="82" rx="19" fill="url(#gw)"/><circle r="35" fill="url(#gb)"/><circle r="31" fill="none" stroke="#fff" stroke-opacity=".7" stroke-width="4" stroke-dasharray="1 2.250"/><path d="M25-21L4 5-4-3z" fill="#f0402f"/><path d="M-24 21L4 5-4-3z" fill="#f4f4f4"/></g>
<g transform="translate(1690 1719)"><path d="M2-45C62-45 60 44 2 44q-14 0-22-6l-24 6 7-23C-56-12-30-45 2-45z" fill="#f4f4f4"/><path d="M2-37C50-37 50 36 2 36q-11 0-20-6l-14 4 4-13C-47-8-25-37 2-37z" fill="#3fc353"/><path d="M-12-21q-14 5-8 20 12 25 34 22 10-3 8-12L10 2 3 9Q-9 3-12-7l5-5z" fill="#f8f8f8"/></g>
<g transform="translate(1801 1719)"><rect x="-41" y="-41" width="82" height="82" rx="19" fill="url(#gs)"/><circle r="36" fill="#222"/><circle r="31" fill="#555" stroke="#a0a4a6" stroke-width="5" stroke-dasharray="2 1.500"/><circle r="24" fill="#45484a" stroke="#b5babc" stroke-width="5"/><circle r="12" fill="#777" stroke="#333" stroke-width="2"/><path d="M0 0h26M0 0l-14-22M0 0l-14 22" stroke="#b5babc" stroke-width="4"/></g>
<g transform="translate(1911 1719)"><path d="M-49-50h80L-5-11h-44z" fill="#25418b"/><text x="-48" y="-18" font-size="34" font-weight="800" fill="#fff" textLength="58" lengthAdjust="spacingAndGlyphs">SAP</text><path d="M10-18l26 2 4 20 6 2v40L0 34V3z" fill="#8f9497"/><path d="M0 5l42 10v30L2 35z" fill="#a8dcf4"/><path d="M1 14l41 8M1 22l41 8M1 30l41 8" stroke="#7cbfe6" stroke-width="2"/><path d="M0 5l42 10" stroke="#444" stroke-width="3"/><path d="M-18 18V2Q-8-20 8-22l16 6-4 12-10 4-6 8-16 8-6 14z" fill="#8f6644"/></g>
<g transform="translate(2021 1719)"><circle cx="2" cy="-26" r="13" fill="#7b83eb"/><circle cx="30" cy="-22" r="9" fill="#5059c9"/><path d="M16-10h27v24q0 14-14 14h-6z" fill="#5059c9"/><path d="M-18-10h44v28q-2 21-22 21T-18 18z" fill="#7b83eb"/><rect x="-44" y="-22" width="44" height="44" rx="4" fill="#4b53bc"/><text x="-22" y="11" text-anchor="middle" font-size="31" font-weight="700" fill="#fff">T</text></g>
<g transform="translate(2131 1719)"><path d="M-24-34q0-5 5-5h57q5 0 5 5v15h-67z" fill="#41a5ee"/><path d="M-24-19h67V0h-67z" fill="#2b7cd3"/><path d="M-24 0h67v19h-67z" fill="#185abd"/><path d="M-24 19h67v15q0 5-5 5h-57q-5 0-5-5z" fill="#103f91"/><rect x="-45" y="-22" width="45" height="44" rx="4" fill="#185abd"/><text x="-23" y="11" text-anchor="middle" font-size="30" font-weight="700" fill="#fff">W</text></g>
<g transform="translate(2241 1719)"><path d="M-6-45h28q13 0 13 16v28Q35 14 20 25L-20 44q-14 6-14-8l9-64q4-17 19-17z" fill="#637174"/><path d="M14-24q-11 0-11 11V6q0 12-16 12" fill="none" stroke="#fff" stroke-width="9"/></g>
<g transform="translate(2351 1719)"><circle r="44.500" fill="#fff"/><path d="M22 23V-1c0-32-44-30-44-1 0 37 38 30 33 0" fill="none" stroke="url(#ga)" stroke-width="7" stroke-linecap="round" transform="translate(0 2)"/></g>
<path d="M2431 1676v96" stroke="#4d3f7c" stroke-width="1.500"/>
<g transform="translate(2509 1719)"><path d="M-36-36L-26 38q26 13 52 0L36-36z" fill="url(#gt)"/><ellipse cy="-36" rx="36" ry="9" fill="#c9bccf" stroke="#f2f0f4" stroke-width="2"/></g>
<g fill="#0a0338"><circle cx="370" cy="1782" r="4"/><circle cx="700" cy="1782" r="4"/><circle cx="1580" cy="1782" r="4"/><circle cx="1910" cy="1782" r="4"/><circle cx="2020" cy="1782" r="4"/><circle cx="2130" cy="1782" r="4"/><circle cx="2240" cy="1782" r="4"/><circle cx="2350" cy="1782" r="4"/></g>
</svg>
</div>
</body>
</html>
